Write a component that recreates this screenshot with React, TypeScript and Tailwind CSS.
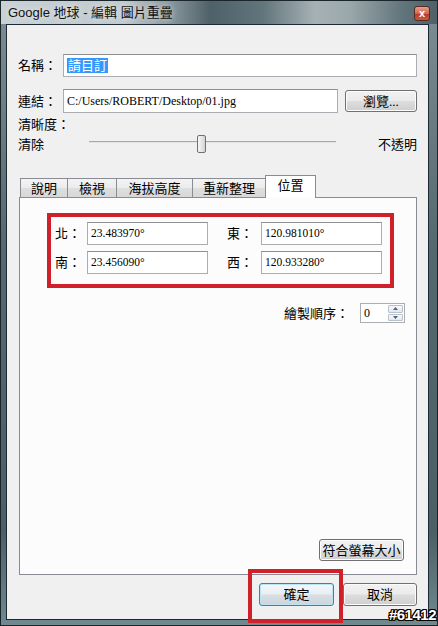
import React from "react";

const serif = "font-['Liberation_Serif','Noto_Sans_CJK_TC',serif]";

function Btn({ children, className = "", primary = false }: { children: React.ReactNode; className?: string; primary?: boolean }) {
  return (
    <div
      className={
        "flex items-center justify-center rounded-[3px] border text-[13px] leading-none text-black " +
        (primary
          ? "border-[#3c7fb1] shadow-[inset_0_0_0_1px_#bde3f7] bg-[linear-gradient(180deg,#f4f8fb_0%,#e9eef2_48%,#d8dfe4_52%,#ccd5db_100%)] "
          : "border-[#707070] shadow-[inset_0_0_0_1px_#fcfcfc] bg-[linear-gradient(180deg,#f2f2f2_0%,#ebebeb_48%,#dddddd_52%,#cfcfcf_100%)] ") +
        className
      }
    >
      {children}
    </div>
  );
}

function Field({ children, className = "" }: { children?: React.ReactNode; className?: string }) {
  return (
    <div
      className={
        "flex items-center bg-white border border-[#abadb3] border-t-[#8e8f8f] pl-[3px] text-black " + className
      }
    >
      {children}
    </div>
  );
}

export default function App() {
  const tabs = [
    { t: "說明", w: "w-[48px]" },
    { t: "檢視", w: "w-[50px]" },
    { t: "海拔高度", w: "w-[77px]" },
    { t: "重新整理", w: "w-[74px]" },
  ];
  return (
    <div
      className={
        "relative w-[438px] h-[626px] overflow-hidden border border-[#1b262b] bg-[linear-gradient(180deg,#7d8e95_0%,#56686f_40%,#4d5f66_85%,#6f8a90_100%)] flex flex-col " +
        serif
      }
    >
      {/* title bar */}
      <div className="h-[23px] flex items-center justify-between pl-[7px] pr-[7px] bg-[linear-gradient(90deg,#c9d1d4_0%,#c0c9cd_28%,#8d9ca2_38%,#4f6168_48%,#62757c_60%,#a6b1b5_72%,#9aa7ab_80%,#62757c_92%,#4f6168_100%)]">
        <span className="font-['Liberation_Sans','Noto_Sans_CJK_TC',sans-serif] text-[13px] leading-none text-[#111] [text-shadow:0_0_6px_rgba(255,255,255,0.8)]">
          Google 地球 - 編輯 圖片重疊
        </span>
        <div className="w-[16px] h-[15px] mt-[2px] rounded-[3px] border border-[#5a2a24] bg-[linear-gradient(180deg,#e9a08e_0%,#d0654c_50%,#b83a24_52%,#c8583e_100%)] flex items-center justify-center text-white text-[11px] font-bold leading-none font-['Liberation_Sans',sans-serif]">
          x
        </div>
      </div>

      {/* client */}
      <div className="ml-[5px] w-[423px] h-[596px] border border-[#1d2a33] bg-[#f0f0f0] flex flex-col px-[11px] text-[13px] text-black">
        {/* name */}
        <div className="mt-[29px] h-[23px] flex items-center">
          <span className="w-[45px] leading-none">名稱：</span>
          <Field className="flex-1 h-[23px]">
            <span className="bg-[#3399ff] text-white leading-[15px] px-[1px]">請目訂</span>
          </Field>
        </div>
        {/* link */}
        <div className="mt-[12px] h-[24px] flex items-center">
          <span className="w-[45px] leading-none">連結：</span>
          <Field className="w-[275px] h-[24px] text-[12px]">C:/Users/ROBERT/Desktop/01.jpg</Field>
          <Btn className="ml-[7px] w-[72px] h-[22px]">瀏覽...</Btn>
        </div>
        {/* clarity */}
        <div className="mt-[3px] h-[16px] flex items-center leading-none">清晰度：</div>
        <div className="mt-[2px] h-[20px] flex items-center">
          <span className="w-[71px] leading-none">清除</span>
          <div className="relative w-[247px] h-[20px]">
            <div className="absolute left-0 right-0 top-[7px] h-[1px] bg-[#a8a8a8]" />
            <div className="absolute left-0 right-0 top-[8px] h-[1px] bg-[#e4e4e4]" />
            <div className="absolute left-[108px] top-[1px] w-[9px] h-[18px] rounded-[2px] border border-[#707070] bg-[linear-gradient(90deg,#f7f7f7_0%,#e6e6e6_50%,#d2d2d2_100%)]" />
          </div>
          <span className="flex-1 text-right leading-none">不透明</span>
        </div>

        {/* tabs */}
        <div className="mt-[21px] ml-[1px] h-[22px] flex items-end pl-[1px]">
          {tabs.map((tb, i) => (
            <div
              key={tb.t}
              className={
                tb.w +
                " h-[19px] border border-b-0 border-[#898c95] bg-[linear-gradient(180deg,#f4f4f4_0%,#ebebeb_50%,#dedede_52%,#d8d8d8_100%)] flex items-center justify-center leading-none " +
                (i > 0 ? "-ml-px" : "")
              }
            >
              {tb.t}
            </div>
          ))}
          <div className="-ml-px w-[51px] h-[23px] -mb-px relative z-10 border border-b-0 border-[#898c95] bg-white flex items-start pt-[3px] justify-center leading-none">
            位置
          </div>
        </div>
        {/* panel */}
        <div className="ml-[1px] h-[378px] border border-[#898c95] bg-[#fcfcfc] flex flex-col">
          <div className="ml-[27px] mt-[15px] w-[347px] h-[75px] border-4 border-[#d0212b] flex flex-col pt-[5px] gap-[6px]">
            {[
              ["北：", "23.483970°", "東：", "120.981010°"],
              ["南：", "23.456090°", "西：", "120.933280°"],
            ].map((r) => (
              <div key={r[0]} className="flex items-center pl-[4px] h-[23px]">
                <span className="w-[32px] leading-none">{r[0]}</span>
                <Field className="w-[121px] h-[23px] text-[11.5px]">{r[1]}</Field>
                <span className="ml-[19px] w-[34px] leading-none">{r[2]}</span>
                <Field className="w-[121px] h-[23px] text-[11.5px]">{r[3]}</Field>
              </div>
            ))}
          </div>
          <div className="mt-[15px] mr-[11px] flex items-center justify-end">
            <span className="leading-none mr-[11px]">繪製順序：</span>
            <div className="w-[45px] h-[20px] flex bg-white border border-[#abadb3]">
              <span className="flex-1 pl-[3px] text-[12px] leading-[18px]">0</span>
              <div className="w-[15px] my-[1px] mr-[1px] flex flex-col gap-[1px]">
                <div className="flex-1 rounded-[1px] border border-[#b9c2cb] bg-[linear-gradient(180deg,#f8f8f8,#e4e8ec)] flex items-center justify-center">
                  <svg width="5" height="3" viewBox="0 0 5 3"><path d="M0 3 L2.5 0 L5 3Z" fill="#4d6185" /></svg>
                </div>
                <div className="flex-1 rounded-[1px] border border-[#b9c2cb] bg-[linear-gradient(180deg,#f8f8f8,#e4e8ec)] flex items-center justify-center">
                  <svg width="5" height="3" viewBox="0 0 5 3"><path d="M0 0 L2.5 3 L5 0Z" fill="#4d6185" /></svg>
                </div>
              </div>
            </div>
          </div>
          <div className="mt-auto mb-[13px] mr-[12px] self-end">
            <Btn className="w-[85px] h-[22px]">符合螢幕大小</Btn>
          </div>
        </div>

        {/* buttons */}
        <div className="mt-[8px] h-[23px] flex justify-end gap-[9px]">
          <Btn primary className="w-[75px] h-[23px]">確定</Btn>
          <Btn className="w-[74px] h-[23px]">取消</Btn>
        </div>
      </div>

      {/* annotation box */}
      <div className="absolute left-[247px] top-[568px] w-[95px] h-[54px] border-4 border-[#d0212b]" />
      {/* watermark */}
      <div className="absolute right-[1px] bottom-[3px] font-['Liberation_Sans',sans-serif] font-bold text-[15px] leading-none tracking-[-0.5px] text-white [text-shadow:1px_0_0_#000,-1px_0_0_#000,0_1px_0_#000,0_-1px_0_#000,1px_1px_0_#000,-1px_-1px_0_#000,1px_-1px_0_#000,-1px_1px_0_#000]">
        #61412
      </div>
    </div>
  );
}
